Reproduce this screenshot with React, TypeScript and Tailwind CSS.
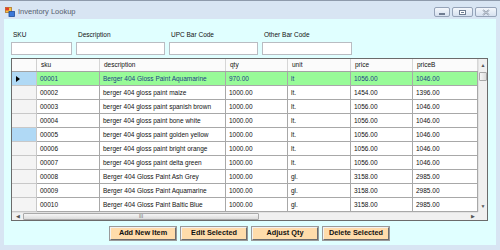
import React from "react";

const rows = [
  ["00001", "Berger 404 Gloss Paint Aquamarine", "970.00", "lt", "1056.00", "1046.00"],
  ["00002", "berger 404 gloss paint maize", "1000.00", "lt.", "1454.00", "1396.00"],
  ["00003", "berger 404 gloss paint spanish brown", "1000.00", "lt.", "1056.00", "1046.00"],
  ["00004", "berger 404 gloss paint bone white", "1000.00", "lt.", "1056.00", "1046.00"],
  ["00005", "berger 404 gloss paint golden yellow", "1000.00", "lt.", "1056.00", "1046.00"],
  ["00006", "berger 404 gloss paint bright orange", "1000.00", "lt.", "1056.00", "1046.00"],
  ["00007", "berger 404 gloss paint delta green", "1000.00", "lt.", "1056.00", "1046.00"],
  ["00008", "Berger 404 Gloss Paint Ash Grey", "1000.00", "gl.", "3158.00", "2985.00"],
  ["00009", "Berger 404 Gloss Paint Aquamarine", "1000.00", "gl.", "3158.00", "2985.00"],
  ["00010", "Berger 404 Gloss Paint Baltic Blue", "1000.00", "gl.", "3158.00", "2985.00"],
];

const colW = ["w-[63px]", "w-[126px]", "w-[62px]", "w-[63px]", "w-[62px]", "w-[65px]"];
const headers = ["sku", "description", "qty", "unit", "price", "priceB"];

function AppIcon() {
  return (
    <svg width="10" height="10" viewBox="0 0 10 10">
      <rect x="0.5" y="0.5" width="6" height="5" fill="#f4c542" stroke="#b0762a" strokeWidth="0.8" />
      <rect x="0.5" y="0.5" width="3.5" height="3" fill="#e0402a" />
      <rect x="4" y="4.5" width="5.5" height="5" fill="#3a78d8" stroke="#1f4d9a" strokeWidth="0.8" />
    </svg>
  );
}

function WinBtn({ w, children }: { w: string; children: React.ReactNode }) {
  return (
    <div
      className={`${w} h-[10px] rounded-[2px] border border-[#95a3b8] bg-gradient-to-b from-[#f3f7fc] to-[#d6e1ef] flex items-center justify-center`}
    >
      {children}
    </div>
  );
}

export default function App() {
  return (
    <div className="w-[500px] h-[250px] overflow-hidden bg-[#d8e5f3] border-t border-[#8e9aab] flex flex-col font-['Liberation_Sans',Arial,sans-serif]">
      {/* Title bar */}
      <div className="h-[18px] flex items-start shrink-0">
        <div className="pl-[5px] pt-[6px]">
          <AppIcon />
        </div>
        <div className="pl-[3px] pt-[6px] text-[7.5px] leading-[9px] text-[#55606e]">Inventory Lookup</div>
        <div className="ml-auto pt-[6px] pr-[3px] flex gap-[2px]">
          <WinBtn w="w-[16px]">
            <div className="w-[6px] h-[2px] mt-[3px] bg-white border border-[#6f7d92]" />
          </WinBtn>
          <WinBtn w="w-[21px]">
            <div className="w-[7px] h-[5px] bg-white border border-[#6f7d92] flex items-center justify-center">
              <div className="w-[3px] h-[1px] bg-[#6f7d92]" />
            </div>
          </WinBtn>
          <WinBtn w="w-[22px]">
            <svg width="8" height="7" viewBox="0 0 8 7">
              <path d="M1 1 L7 6 M7 1 L1 6" stroke="#6f7d92" strokeWidth="1.6" />
              <path d="M1 1 L7 6 M7 1 L1 6" stroke="#ffffff" strokeWidth="0.6" />
            </svg>
          </WinBtn>
        </div>
      </div>

      {/* Client area */}
      <div className="mx-[4px] h-[226px] bg-[#e0ffff] flex flex-col shrink-0 text-[6.5px] text-black">
        {/* Search fields */}
        <div className="pt-[12px] pl-[7px] flex gap-[4px]">
          {[
            ["SKU", "w-[61px]"],
            ["Description", "w-[89px]"],
            ["UPC Bar Code", "w-[89px]"],
            ["Other Bar Code", "w-[90px]"],
          ].map(([label, w]) => (
            <div key={label} className="flex flex-col">
              <div className="h-[8px] leading-[8px] pl-[2px] text-[#111]">{label}</div>
              <div className={`${w} h-[13px] mt-[3px] bg-white border border-[#b9bcc2]`} />
            </div>
          ))}
        </div>

        {/* Data grid */}
        <div className="ml-[7px] mt-[3px] w-[477px] border border-[#6b6b6b] bg-white flex flex-col">
          <div className="flex">
            <div className="w-[466px] flex flex-col">
              {/* header */}
              <div className="h-[13px] flex border-b border-[#a3a3a3] bg-[#fbfbfb]">
                <div className="w-[25px] border-r border-[#d0d0d0]" />
                {headers.map((h, i) => (
                  <div
                    key={h}
                    className={`${colW[i]} border-r border-[#d6d6d6] pl-[4px] flex items-center text-[#111]`}
                  >
                    {h}
                  </div>
                ))}
              </div>
              {rows.map((r, ri) => {
                const first = ri === 0;
                const hdrSel = ri === 0 || ri === 4;
                return (
                  <div key={ri} className="h-[14px] flex">
                    <div
                      className={`w-[25px] border-r border-b border-[#c8c8c8] flex items-center pl-[4px] ${
                        hdrSel ? "bg-[#b0d9f5]" : "bg-[#f4f4f4]"
                      }`}
                    >
                      {first && (
                        <svg width="4" height="6" viewBox="0 0 4 6">
                          <path d="M0 0 L4 3 L0 6 Z" fill="#000" />
                        </svg>
                      )}
                    </div>
                    {r.map((c, ci) => (
                      <div
                        key={ci}
                        className={`${colW[ci]} border-r border-b border-[#a8a8a8] pl-[3px] flex items-center whitespace-nowrap overflow-hidden ${
                          first ? "bg-[#98fb98] text-[#1c3f86]" : "bg-white text-[#111]"
                        }`}
                      >
                        {c}
                      </div>
                    ))}
                  </div>
                );
              })}
            </div>
            {/* vertical scrollbar */}
            <div className="w-[9px] bg-[#f0f0f0] border-l border-[#e2e2e2] flex flex-col items-center">
              <div className="h-[13px] flex items-center justify-center text-[5px] text-[#555]">▲</div>
              <div className="w-[8px] h-[9px] rounded-[1px] border border-[#a9a9a9] bg-gradient-to-r from-[#f6f6f6] to-[#dcdcdc]" />
              <div className="flex-1" />
              <div className="h-[10px] flex items-center justify-center text-[5px] text-[#555]">▼</div>
            </div>
          </div>
          {/* horizontal scrollbar */}
          <div className="h-[8px] flex">
            <div className="w-[466px] bg-[#f0f0f0] border-t border-[#e2e2e2] flex items-center">
              <div className="w-[11px] flex items-center justify-center text-[5px] text-[#555]">◀</div>
              <div className="w-[236px] h-[7px] rounded-[1px] border border-[#a9a9a9] bg-gradient-to-b from-[#f6f6f6] to-[#dcdcdc] flex items-center justify-center text-[5px] leading-[5px] text-[#666]">
                III
              </div>
              <div className="flex-1" />
              <div className="w-[11px] flex items-center justify-center text-[5px] text-[#555]">▶</div>
            </div>
            <div className="w-[9px] bg-[#f0f0f0]" />
          </div>
        </div>

        {/* Buttons */}
        <div className="mt-[6px] pl-[106px] flex gap-[5px]">
          {["Add New Item", "Edit Selected", "Adjust Qty", "Delete Selected"].map((b) => (
            <div
              key={b}
              className="w-[66px] h-[13px] bg-[#ffdcab] border border-t-[#f2f2f2] border-l-[#f2f2f2] border-r-[#6d6d6d] border-b-[#6d6d6d] outline outline-1 outline-[#9a9a9a] flex items-center justify-center font-bold text-[7.3px] text-[#111]"
            >
              {b}
            </div>
          ))}
        </div>
      </div>
    </div>
  );
}
